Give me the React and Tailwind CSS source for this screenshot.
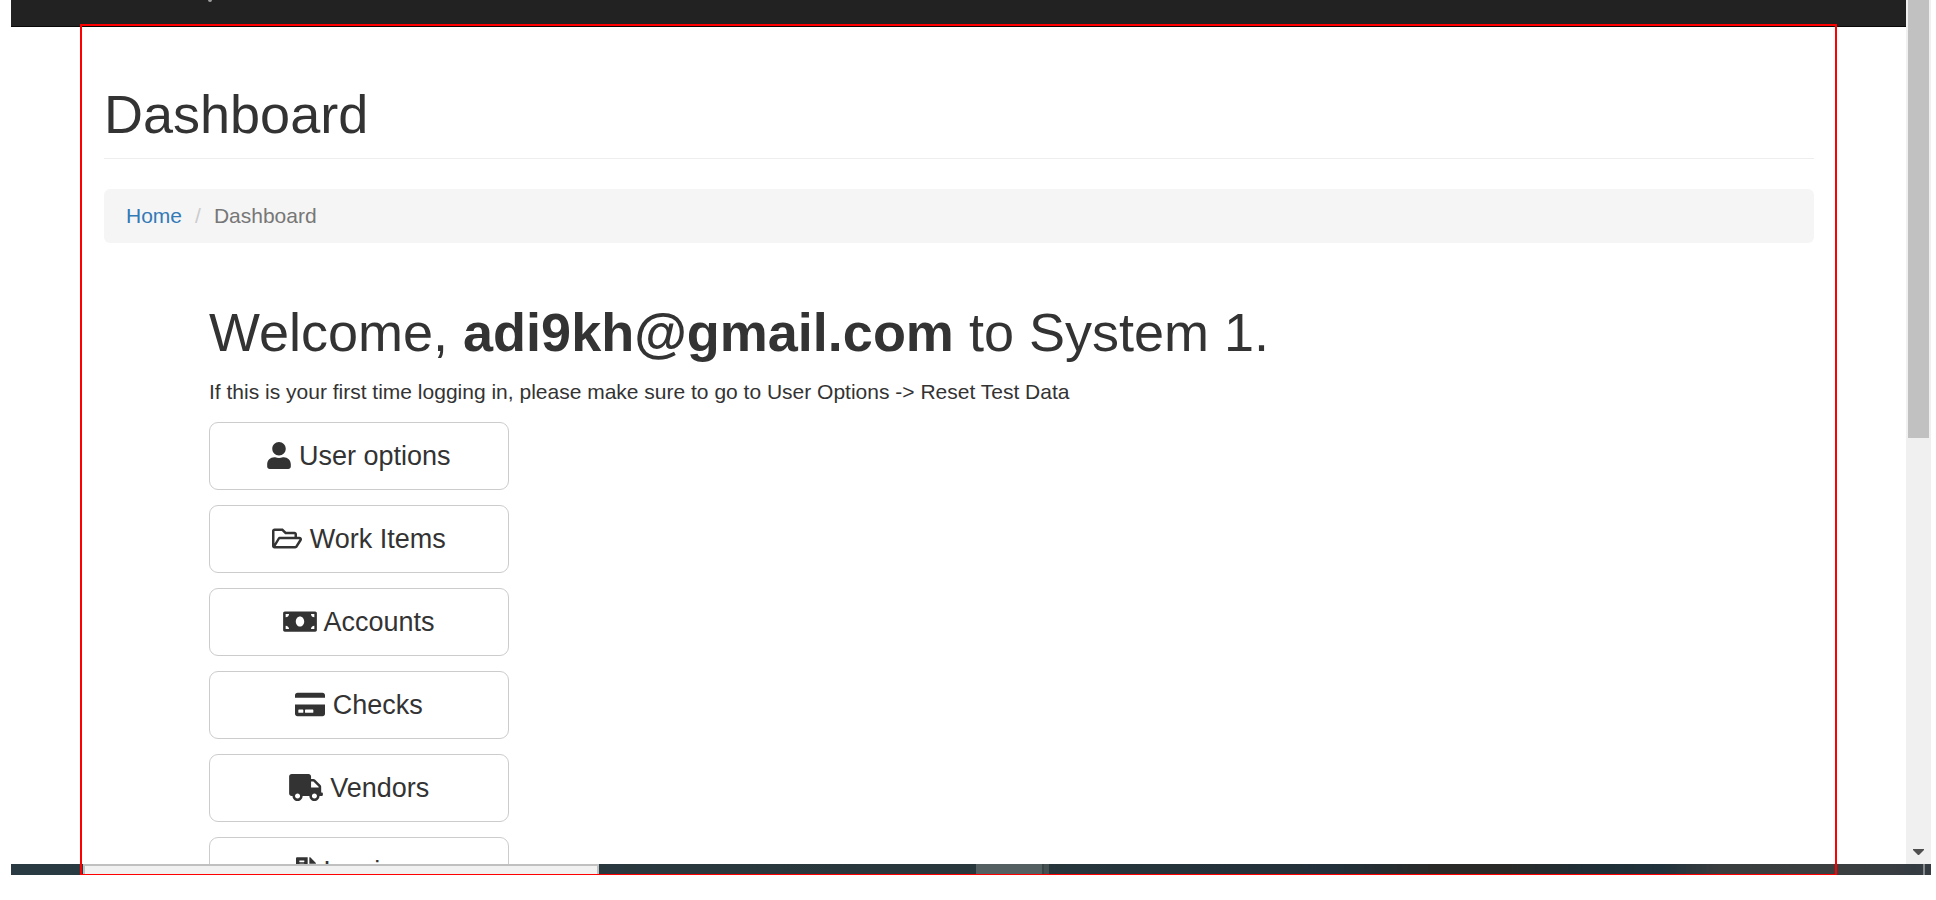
import {
  FaUser,
  FaRegFolderOpen,
  FaMoneyBill,
  FaCreditCard,
  FaTruck,
  FaFileInvoice,
} from 'react-icons/fa';

const menu = [
  { label: 'User options', Icon: FaUser, size: 'w-6' },
  { label: 'Work Items', Icon: FaRegFolderOpen, size: 'w-[30px]' },
  { label: 'Accounts', Icon: FaMoneyBill, size: 'w-[34px]' },
  { label: 'Checks', Icon: FaCreditCard, size: 'w-[30px]' },
  { label: 'Vendors', Icon: FaTruck, size: 'w-[34px]' },
  { label: 'Invoices', Icon: FaFileInvoice, size: 'w-5' },
];

function Breadcrumb() {
  return (
    <nav aria-label="Breadcrumb" className="mt-[30px] rounded-md bg-[#f5f5f5] px-[22px] py-3">
      <ol className="flex">
        <li>
          <a href="#home" className="text-[#337ab7]">Home</a>
        </li>
        <li className="text-[#777777]">
          <span className="px-[13px] text-[#cccccc]">/</span>
          Dashboard
        </li>
      </ol>
    </nav>
  );
}

function MenuButton({ label, Icon, size }) {
  return (
    <button
      type="button"
      className="w-[300px] rounded-[9px] border border-[#cccccc] bg-white py-[15px] text-center text-[27px] leading-9 whitespace-nowrap"
    >
      <Icon aria-hidden="true" className={`inline-block h-[27px] align-[-4px] ${size}`} />{' '}
      {label}
    </button>
  );
}

function ScrollBar() {
  return (
    <div className="flex w-[25px] shrink-0 flex-col justify-between bg-[#f0f0f0] px-0.5">
      <div className="h-[438px] bg-[#c1c1c1]" />
      <svg className="mx-auto mb-[9px] h-1.5 w-[11px]" viewBox="0 0 11 6" aria-hidden="true">
        <path d="M0 0h11v1L6 6H5L0 1z" fill="#505050" />
      </svg>
    </div>
  );
}

function TaskBar() {
  return (
    <div className="flex h-[11px] shrink-0 bg-[linear-gradient(90deg,#293a42_0%,#28373b_50%,#21303a_69%,#292a28_74%,#292a28_78%,#1f2e37_82%,#20323c_86%,#3a3d3e_89%,#3b3e3f_95%,#343c42_100%)]">
      <div className="ml-[72px] w-[516px] border-x-2 border-t-2 border-[#c0c0c0] bg-[#f1f1f1]" />
      <div className="ml-[377px] w-[66px] bg-[#535f60]" />
      <div className="w-0.5 bg-[#384547]" />
      <div className="w-[5px] bg-[#445052]" />
      <div className="mr-1.5 ml-auto w-0.5 bg-[#85898c]" />
    </div>
  );
}

export default function App() {
  return (
    <div className="h-screen bg-white pr-[5px] pb-[25px] pl-[11px] font-['Liberation_Sans',Arial,sans-serif] text-[21px] leading-[30px] text-[#333333]">
      <div className="relative flex h-full flex-col">
        <div className="flex min-h-0 flex-1">
          <div className="min-w-0 flex-1 overflow-hidden">
            <header className="h-[27px] border-b border-[#080808] bg-[#222222] pl-[197px]">
              <div className="h-0.5 w-1 rounded-b-sm bg-[#9d9d9d]" />
            </header>
            <main className="mr-[92px] ml-[93px] pt-[57px]">
              <h1 className="border-b border-[#eeeeee] pb-[14px] text-[54px] leading-[60px]">
                Dashboard
              </h1>
              <Breadcrumb />
              <section className="mt-[59px] pl-[105px]">
                <h2 className="text-[54px] leading-[60px]">
                  Welcome, <strong>adi9kh@gmail.com</strong> to System 1.
                </h2>
                <p className="my-[15px]">
                  If this is your first time logging in, please make sure to go to User Options
                  -&gt; Reset Test Data
                </p>
                <div className="flex flex-col gap-[15px]">
                  {menu.map((item) => (
                    <MenuButton key={item.label} {...item} />
                  ))}
                </div>
              </section>
            </main>
          </div>
          <ScrollBar />
        </div>
        <TaskBar />
        <div className="pointer-events-none absolute top-6 right-[94px] bottom-0 left-[69px] border-2 border-b border-[#ff0000]" />
      </div>
    </div>
  );
}
